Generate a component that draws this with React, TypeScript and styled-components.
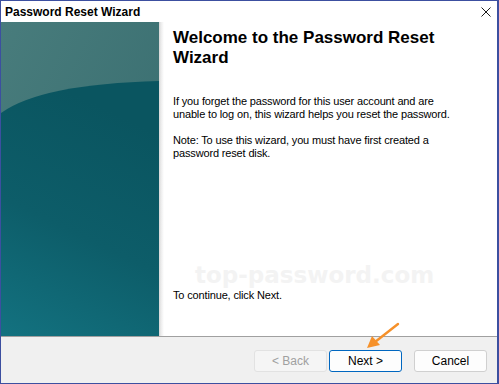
import { createGlobalStyle, styled } from "styled-components";

const GlobalStyle = createGlobalStyle`
  html, body {
    margin: 0;
    padding: 0;
    background: #ffffff;
  }
  * {
    box-sizing: border-box;
  }
`;

const Window = styled.div`
  position: relative;
  width: 499px;
  height: 384px;
  display: flex;
  flex-direction: column;
  border: 1px solid #3c4fa0;
  border-right-width: 2px;
  background: #ffffff;
  font-family: "Liberation Sans", Arial, sans-serif;
  color: #000;
  overflow: hidden;
`;

const TitleBar = styled.div`
  height: 21px;
  display: flex;
  align-items: center;
  justify-content: space-between;
  padding: 0 6px 0 4px;
  font-size: 12px;
  font-weight: bold;
`;

const Body = styled.div`
  height: 314px;
  display: flex;
`;

const SidePanel = styled.div`
  width: 158px;
  flex-shrink: 0;
  height: 100%;
  svg {
    display: block;
  }
`;

const Content = styled.div`
  flex: 1;
  display: flex;
  flex-direction: column;
  padding: 6px 12px 34px 14px;
  background: linear-gradient(to right, #d6d6d6 0px, #ececec 2px, #ffffff 5px);
`;

const Heading = styled.h1`
  margin: 0;
  max-width: 280px;
  font-size: 17px;
  line-height: 20px;
  font-weight: bold;
`;

const Paragraph = styled.p<{ $gap?: number }>`
  margin: ${(p) => p.$gap ?? 0}px 0 0;
  max-width: 292px;
  font-size: 11px;
  line-height: 13px;
  letter-spacing: -0.15px;
`;

const Spacer = styled.div`
  flex: 1;
`;

const Footer = styled.div`
  flex: 1;
  display: flex;
  justify-content: flex-end;
  align-items: flex-start;
  padding: 13px 10px 0 0;
  border-top: 1px solid #a0a0a0;
  background: #f0f0f0;
`;

const Button = styled.button<{ $primary?: boolean; $gap?: number }>`
  width: 73px;
  height: 22px;
  margin-left: ${(p) => p.$gap ?? 0}px;
  border-radius: 3px;
  font-family: "Liberation Sans", Arial, sans-serif;
  font-size: 12px;
  padding: 0;
  color: #000;
  background: #fdfdfd;
  border: 1px solid ${(p) => (p.$primary ? "#0067c0" : "#d0d0d0")};
  &:disabled {
    color: #a0a0a0;
    background: #f5f5f5;
    border-color: #e2e2e2;
  }
`;

const Watermark = styled.div`
  position: absolute;
  left: 194px;
  top: 264px;
  font-family: "DejaVu Sans", sans-serif;
  font-weight: bold;
  font-size: 23px;
  line-height: 20px;
  color: #f3f3f3;
  pointer-events: none;
`;

const Pointer = styled.svg`
  position: absolute;
  left: 360px;
  top: 318px;
`;

function PanelArt() {
  return (
    <svg width="158" height="314" viewBox="0 0 158 314">
      <defs>
        <linearGradient id="top" x1="0" y1="0" x2="1" y2="1">
          <stop offset="0" stopColor="#487c7c" />
          <stop offset="1" stopColor="#366b6e" />
        </linearGradient>
        <linearGradient id="low" x1="0.3" y1="0" x2="0" y2="1">
          <stop offset="0" stopColor="#0a5560" />
          <stop offset="0.5" stopColor="#0d5d69" />
          <stop offset="1" stopColor="#137280" />
        </linearGradient>
      </defs>
      <rect width="158" height="314" fill="url(#top)" />
      <path d="M0 91 Q40 62 158 59 L158 314 L0 314 Z" fill="url(#low)" />
    </svg>
  );
}

export default function App() {
  return (
    <>
      <GlobalStyle />
      <Window>
        <TitleBar>
          <span>Password Reset Wizard</span>
          <svg width="10" height="10" viewBox="0 0 10 10">
            <path d="M0.5 0.5 L9.5 9.5 M9.5 0.5 L0.5 9.5" stroke="#1a1a1a" strokeWidth="1" />
          </svg>
        </TitleBar>
        <Body>
          <SidePanel>
            <PanelArt />
          </SidePanel>
          <Content>
            <Heading>Welcome to the Password Reset Wizard</Heading>
            <Paragraph $gap={27}>
              If you forget the password for this user account and are unable to log on, this wizard
              helps you reset the password.
            </Paragraph>
            <Paragraph $gap={13}>
              Note: To use this wizard, you must have first created a password reset disk.
            </Paragraph>
            <Spacer />
            <Paragraph>To continue, click Next.</Paragraph>
          </Content>
        </Body>
        <Footer>
          <Button disabled>&lt; Back</Button>
          <Button $primary $gap={2}>
            Next &gt;
          </Button>
          <Button $gap={12}>Cancel</Button>
        </Footer>
        <Watermark>top-password.com</Watermark>
        <Pointer width="42" height="34" viewBox="0 0 42 34">
          <path d="M37 5 L14 23" stroke="#f6912a" strokeWidth="2.4" strokeLinecap="round" />
          <path d="M6 29 L11 17 L19 26 Z" fill="#f6912a" />
        </Pointer>
      </Window>
    </>
  );
}
